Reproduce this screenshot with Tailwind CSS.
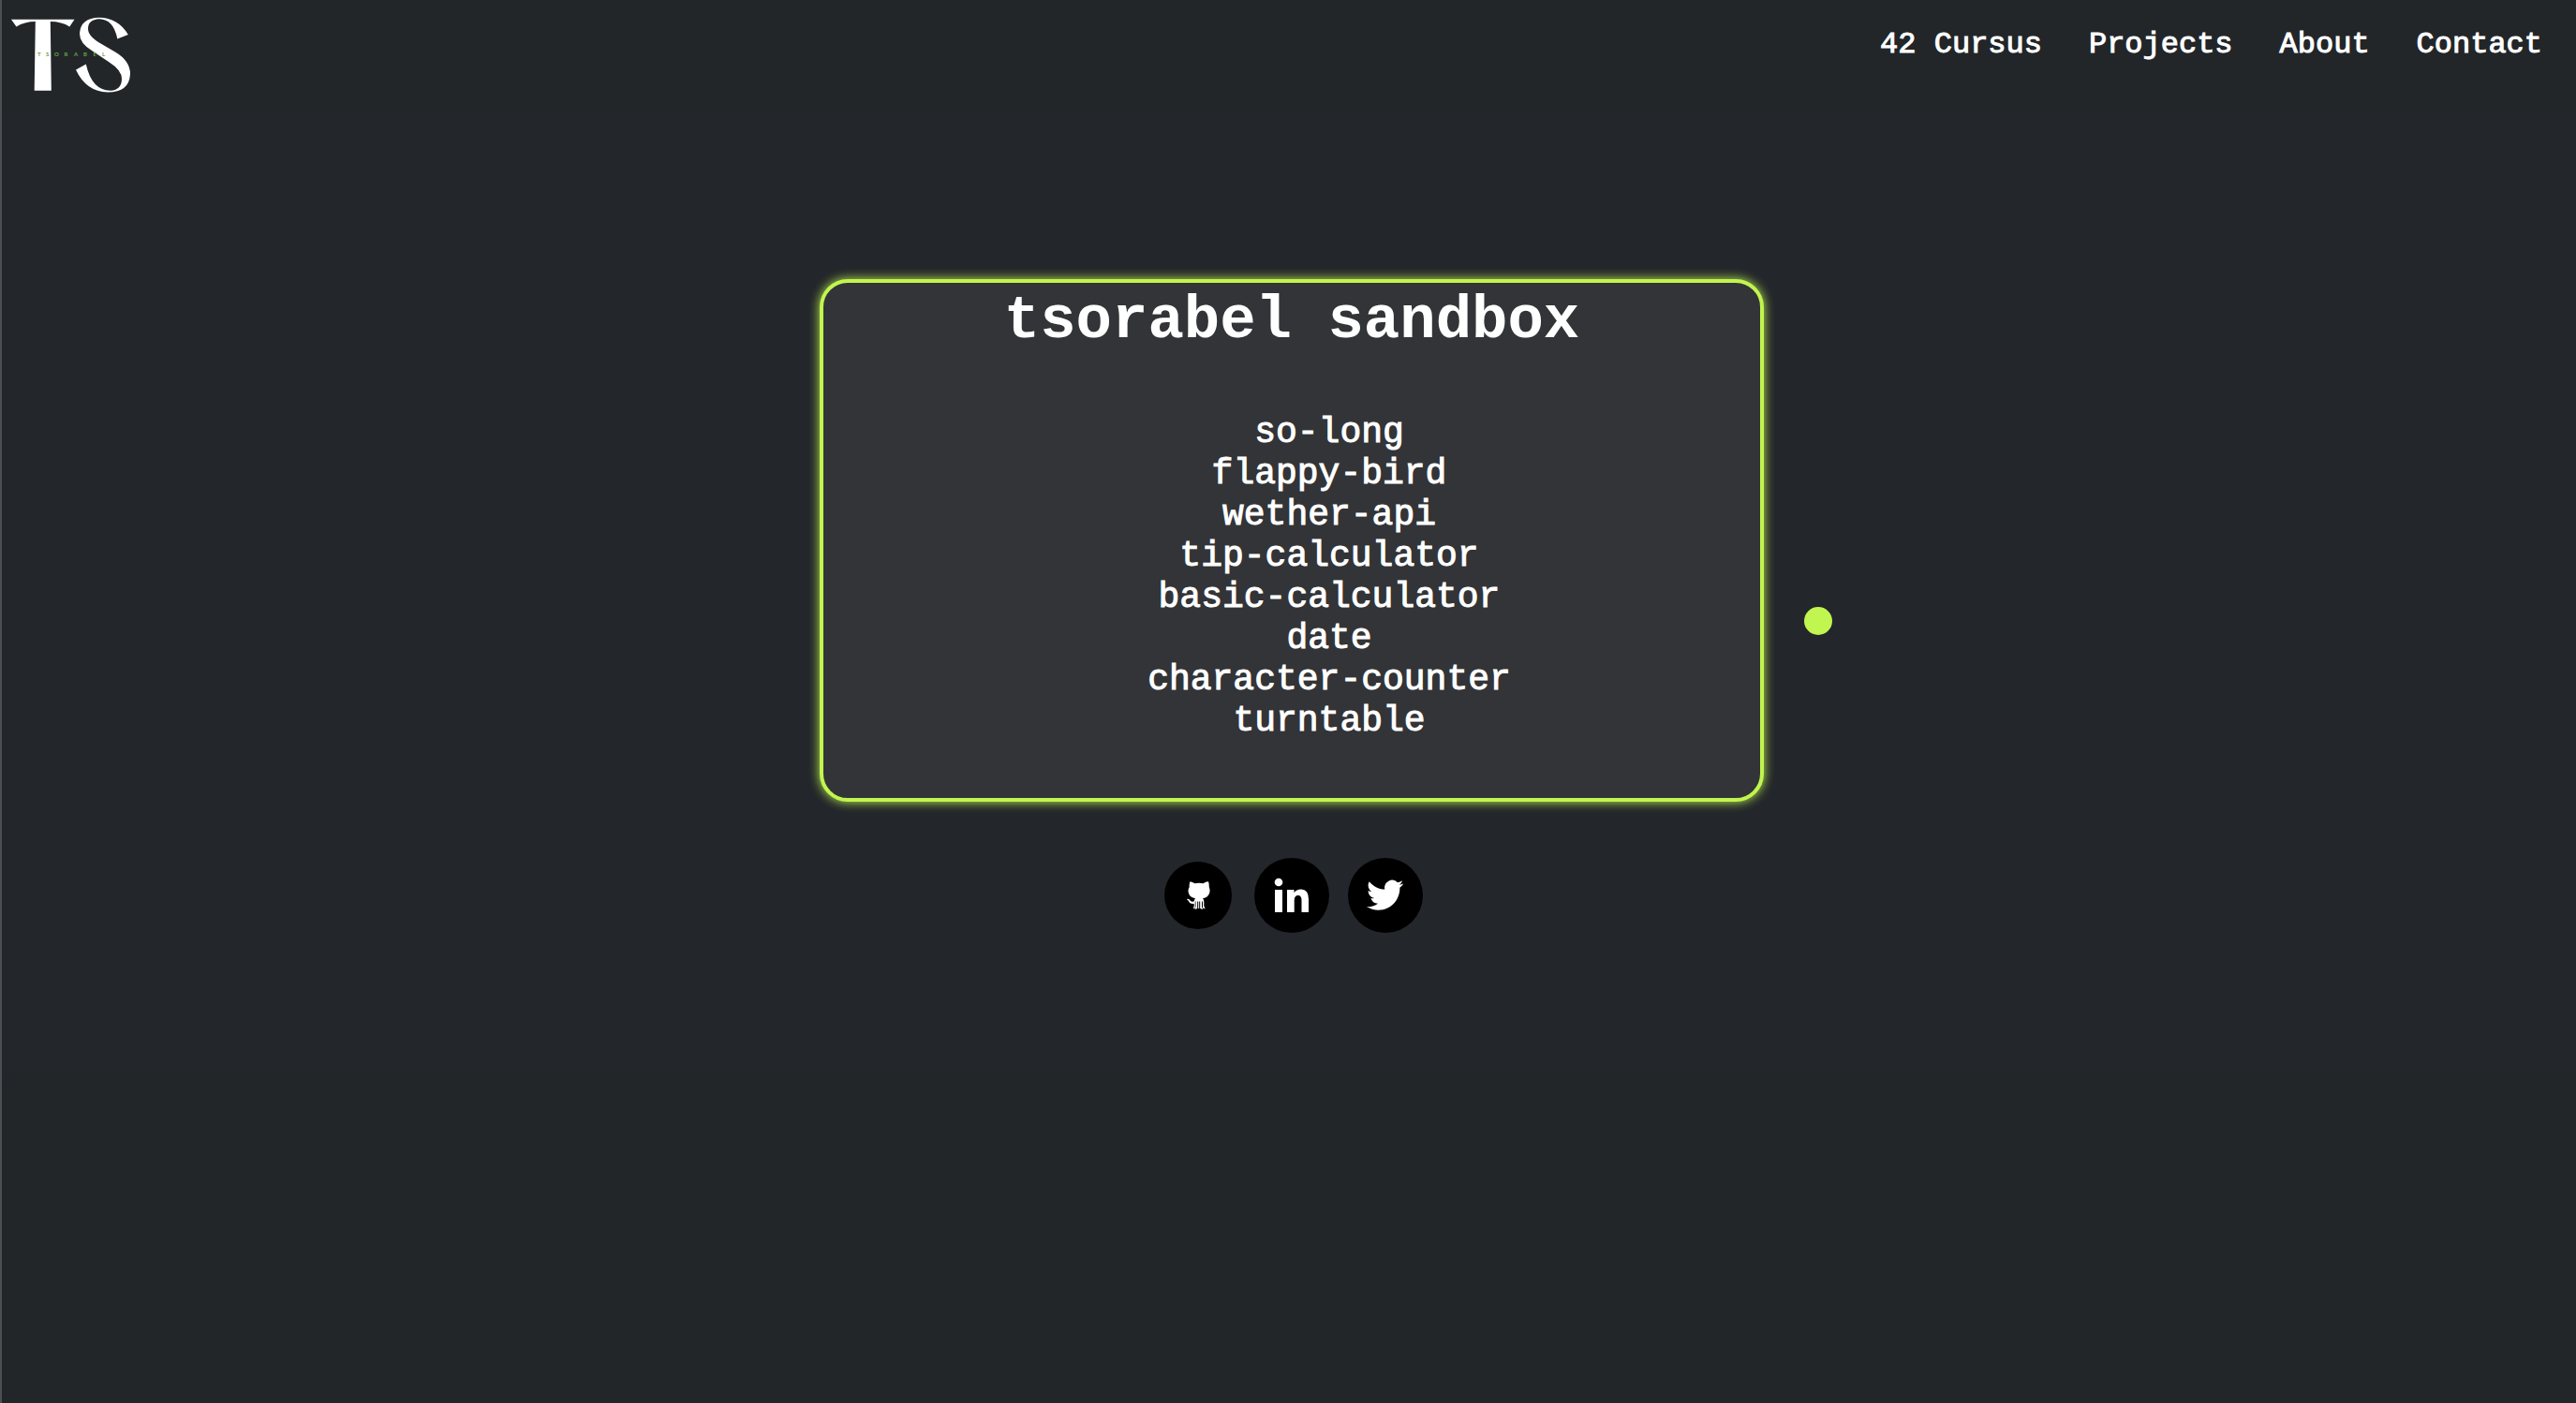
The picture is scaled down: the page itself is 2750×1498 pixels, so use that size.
<!DOCTYPE html>
<html lang="en">
<head>
<meta charset="utf-8">
<meta name="viewport" content="width=device-width, initial-scale=1">
<title>tsorabel sandbox</title>
<script src="https://cdn.jsdelivr.net/npm/@tailwindcss/browser@4"></script>
</head>
<body class="min-h-screen bg-[#222629] border-l-2 border-[#4d5052] text-white font-['Liberation_Mono',monospace]">
<header class="flex items-start justify-between pt-4 pl-2 pr-9 pb-4">
  <a href="#" aria-label="tsorabel home" class="block">
    <svg class="block w-33 h-22" viewBox="10 16 132 88" fill="#fff">
      <path d="M12 20.700H79.500L74.300 28.500Q66 23 53.800 23L54.800 96.700H36.700L37.800 23Q26 23 17.500 28.500Z"/>
      <path d="M136.800 37L125.300 41.500Q121 20.500 106 20.300Q94 21 94 30.500C94 36 98 40 105 45L123 55.500Q139 65 139 79Q138 98.500 115 98.500Q92 98 81 74.500L91.800 68.500Q98 96.500 118 96.800Q130 96 130 84Q130 75 116 66L98 54Q85 46 85 36Q86 19 106 18.800Q126 19 136.800 37Z"/>
      <text y="59.500" x="40 49 58 68.500 79 89 99.500 109" font-family="Lato, sans-serif" font-size="6" font-weight="700" fill="#6aa84a">TSORABEL</text>
    </svg>
  </a>
  <nav class="flex gap-[50px] pt-3 text-[32px] leading-10 [-webkit-text-stroke:1px_white]">
    <a href="#">42 Cursus</a>
    <a href="#">Projects</a>
    <a href="#">About</a>
    <a href="#">Contact</a>
  </nav>
</header>
<main class="bg-[#23262b] flex flex-col items-center pl-1.5 pt-[178px] pb-[150px]">
  <section class="w-full max-w-[1008px] bg-[#333437] border-4 border-[#c1f54f] rounded-[30px] shadow-[0_0_12px_#c1f54f] text-center pt-[5px] pb-[60px]">
    <h1 class="text-[64px] leading-[72px] font-bold">tsorabel sandbox</h1>
    <ul class="pl-20 pt-[61px] text-[38px] leading-[44px] [-webkit-text-stroke:1px_white]">
      <li><a href="#">so-long</a></li>
      <li><a href="#">flappy-bird</a></li>
      <li><a href="#">wether-api</a></li>
      <li><a href="#">tip-calculator</a></li>
      <li><a href="#">basic-calculator</a></li>
      <li><a href="#">date</a></li>
      <li><a href="#">character-counter</a></li>
      <li><a href="#">turntable</a></li>
    </ul>
  </section>
  <div class="flex gap-5 pt-[60px]">
    <a href="#" aria-label="GitHub" class="size-20 flex items-center justify-center">
      <svg class="size-[72px]" viewBox="0 0 72 72"><circle cx="36" cy="36" r="36" fill="#000"/>
        <path fill="#fff" d="M27.500 21.300Q30 21.700 32.500 23.300Q37 22.300 41.500 23.300Q44 21.500 47 21.300Q48 24 47.700 27Q49 29.500 48.300 33Q47 38.500 41 39.300Q42.300 40.500 42.300 43V47.500L43.700 50.300L41 49.500V42.500H40V48L41 51L38.200 50V42.500H37.200V50H36.200V42.500H35.200V50L32.500 51L33.500 48V42.500H32.800V49.500L30.700 50.300L31.700 47.500V45Q27 45.500 25.500 41.500L23.800 40Q26 38.800 28 42Q29.500 43.300 31.800 42.300Q32 40.300 33 39.300Q27 38.500 25.700 33Q25 29.500 26.700 27Q26.300 24 27.500 21.300Z"/></svg>
    </a>
    <a href="#" aria-label="LinkedIn">
      <svg class="size-20" viewBox="0 0 80 80"><circle cx="40" cy="40" r="40" fill="#000"/>
        <g fill="#fff"><circle cx="26" cy="26" r="4.300"/><path d="M22 34H30V58H22ZM35 34H42.500V37.200Q45 33.500 50 33.500Q58 33.500 58 44V58H50.500V45.500Q50.500 40 46.800 40Q42.700 40 42.700 45.500V58H35Z"/></g></svg>
    </a>
    <a href="#" aria-label="Twitter">
      <svg class="size-20" viewBox="0 0 80 80"><circle cx="40" cy="40" r="40" fill="#000"/>
        <path transform="translate(20 20) scale(1.640)" fill="#fff" d="M23.953 4.570a10 10 0 01-2.825.775 4.958 4.958 0 002.163-2.723c-.951.555-2.005.959-3.127 1.184a4.920 4.920 0 00-8.384 4.482C7.690 8.095 4.067 6.130 1.640 3.162a4.822 4.822 0 00-.666 2.475c0 1.710.870 3.213 2.188 4.096a4.904 4.904 0 01-2.228-.616v.060a4.923 4.923 0 003.946 4.827 4.996 4.996 0 01-2.212.085 4.936 4.936 0 004.604 3.417 9.867 9.867 0 01-6.102 2.105c-.390 0-.779-.023-1.170-.067a13.995 13.995 0 007.557 2.209c9.053 0 13.998-7.496 13.998-13.985 0-.210 0-.420-.015-.630A9.935 9.935 0 0024 4.590z"/></svg>
    </a>
  </div>
</main>
<div aria-hidden="true" class="absolute left-[1926px] top-[648px] size-[30px] rounded-full bg-[#c1f54f]"></div>
</body>
</html>
